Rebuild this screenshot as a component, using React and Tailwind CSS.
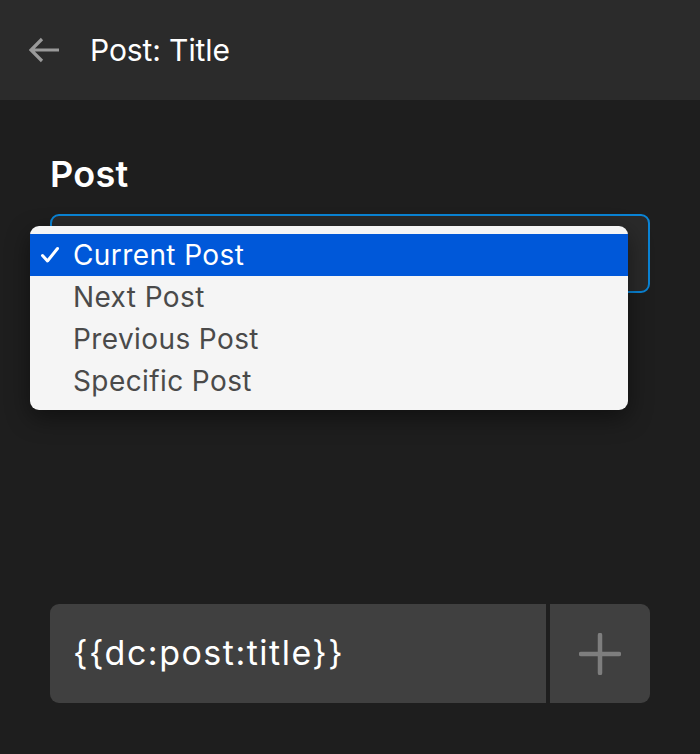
import { useState } from "react";

const OPTIONS = ["Current Post", "Next Post", "Previous Post", "Specific Post"];

function BackArrow() {
  return (
    <svg width="32" height="26" viewBox="0 0 32 26" fill="none">
      <path
        d="M30 13H3M13 2L2 13l11 11"
        stroke="#9a9a9a"
        strokeWidth="3.2"
        strokeLinecap="butt"
        strokeLinejoin="miter"
      />
    </svg>
  );
}

function Check() {
  return (
    <svg width="20" height="18" viewBox="0 0 20 18" fill="none">
      <path
        d="M2.5 9.5l5 5.5L17.5 2.5"
        stroke="#ffffff"
        strokeWidth="3"
        strokeLinecap="round"
        strokeLinejoin="round"
      />
    </svg>
  );
}

function Plus() {
  return (
    <svg width="42" height="42" viewBox="0 0 42 42" fill="none">
      <path d="M21 2v38M2 21h38" stroke="#7e7e7e" strokeWidth="4.5" strokeLinecap="round" />
    </svg>
  );
}

export default function App() {
  const [selected] = useState(0);

  return (
    <div className="w-[700px] h-[754px] bg-[#1e1e1e] overflow-hidden font-['Inter',sans-serif]">
      <header className="h-[100px] bg-[#2b2b2b] flex items-center pl-[29px] gap-[29px]">
        <BackArrow />
        <span className="text-[30px] text-white tracking-[-0.1px]">Post: Title</span>
      </header>

      <div className="px-[50px] pt-[50px]">
        <div className="text-[36px] font-semibold text-white leading-[48px] tracking-[0.3px]">Post</div>

        <div className="relative mt-[16px]">
          <div className="h-[79px] rounded-[9px] border-2 border-[#0a84d6] bg-[#2a2a2a]" />

          <ul className="absolute left-[-20px] top-[12px] w-[598px] rounded-[9px] bg-[#f5f5f5] py-[8px] shadow-[0_8px_24px_rgba(0,0,0,0.45)]">
            {OPTIONS.map((opt, i) => (
              <li
                key={opt}
                className={`h-[42px] flex items-center text-[28px] tracking-[0.4px] ${
                  i === selected ? "bg-[#0058d9] text-white" : "text-[#4a4a4a]"
                }`}
              >
                <span className="w-[43px] flex pl-[10px]">
                  {i === selected && <Check />}
                </span>
                {opt}
              </li>
            ))}
          </ul>
        </div>

        <div className="mt-[311px] h-[99px] flex rounded-[9px] overflow-hidden bg-[#404040]">
          <div className="flex-1 flex items-center pl-[23px] pb-[2px] text-[34px] text-white tracking-[1.5px]">
            {"{{dc:post:title}}"}
          </div>
          <div className="w-[4px] bg-[#1e1e1e]" />
          <div className="w-[100px] flex items-center justify-center">
            <Plus />
          </div>
        </div>
      </div>
    </div>
  );
}
